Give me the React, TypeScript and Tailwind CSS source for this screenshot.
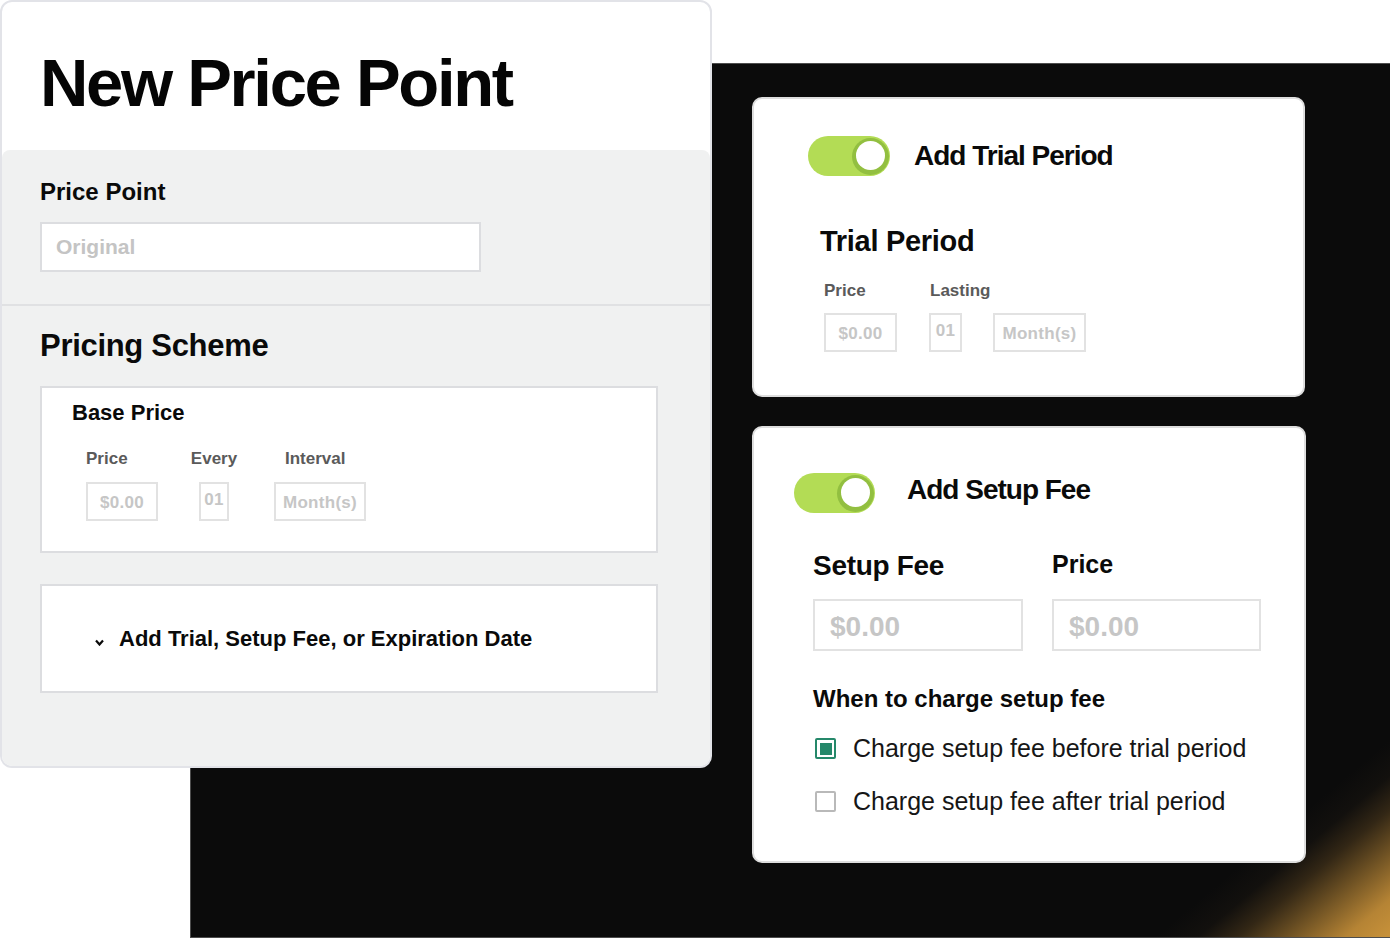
import React from "react";

function Toggle({ w }: { w: string }) {
  return (
    <div className={`${w} h-[40px] rounded-full bg-[#b3dc55] flex items-center justify-end pr-[1px] shrink-0`}>
      <div className="w-[37px] h-[37px] rounded-full bg-[#92bf40] flex items-center justify-center">
        <div className="w-[29px] h-[29px] rounded-full bg-white -translate-y-[1px]" />
      </div>
    </div>
  );
}

function SmallBox({ w, text, high }: { w: string; text: string; high?: boolean }) {
  return (
    <div
      className={`${w} h-[39px] border-2 border-[#e2e2e2] bg-white flex items-center justify-center text-[17px] font-bold text-[#c6c6c6] tracking-[0.3px] ${high ? "pb-[3px]" : "pt-[3px]"}`}
    >
      {text}
    </div>
  );
}

function Checkbox({ checked, label }: { checked?: boolean; label: string }) {
  return (
    <div className="flex items-center gap-[17px] pl-[2px]">
      {checked ? (
        <div className="w-[21px] h-[21px] border-2 border-[#25886a] rounded-[2px] flex items-center justify-center">
          <div className="w-[12px] h-[12px] bg-[#25886a]" />
        </div>
      ) : (
        <div className="w-[21px] h-[21px] border-2 border-[#b9b9b9] rounded-[2px]" />
      )}
      <span className="text-[25px] leading-none text-[#161616]">{label}</span>
    </div>
  );
}

export default function App() {
  return (
    <div className="relative w-[1390px] h-[938px] overflow-hidden bg-white pt-[63px] font-['Liberation_Sans',Arial,sans-serif]">
      {/* dark stage */}
      <div className="ml-[190px] h-[875px] border-l border-b border-t border-[#4d4d4d] bg-[#0b0b0b] bg-[linear-gradient(320deg,#c8923a_0%,rgba(196,142,56,0.92)_2%,rgba(170,124,50,0.68)_4.3%,rgba(115,84,38,0.38)_6.8%,rgba(60,46,28,0.15)_8.6%,rgba(11,11,11,0)_10.5%)] pl-[561px] pt-[33px] flex flex-col gap-[29px]">
        {/* trial card */}
        <div className="w-[553px] h-[300px] bg-white rounded-[10px] border-2 border-[#dedede] pt-[37px]">
          <div className="flex items-center gap-[24px] pl-[54px]">
            <Toggle w="w-[82px]" />
            <h2 className="text-[28px] leading-none font-bold tracking-[-1px] text-[#0a0a0a]">Add Trial Period</h2>
          </div>
          <div className="pl-[66px] mt-[51px]">
            <h3 className="text-[29px] leading-none font-bold tracking-[-0.3px] text-[#0a0a0a]">Trial Period</h3>
            <div className="pl-[4px] mt-[26px] flex text-[17px] leading-none font-bold text-[#5a5a5a]">
              <span className="w-[106px]">Price</span>
              <span>Lasting</span>
            </div>
            <div className="pl-[4px] mt-[14px] flex">
              <SmallBox w="w-[73px]" text="$0.00" />
              <SmallBox w="w-[33px] ml-[32px]" text="01" high />
              <SmallBox w="w-[93px] ml-[31px]" text="Month(s)" />
            </div>
          </div>
        </div>

        {/* setup fee card */}
        <div className="w-[554px] h-[437px] bg-white rounded-[10px] border-2 border-[#dedede] pt-[45px]">
          <div className="flex items-center gap-[32px] pl-[40px]">
            <Toggle w="w-[81px]" />
            <h2 className="text-[28px] leading-none font-bold tracking-[-1px] text-[#0a0a0a] translate-y-[-3px]">Add Setup Fee</h2>
          </div>
          <div className="pl-[59px] mt-[39px]">
            <div className="flex gap-[29px]">
              <div className="w-[210px]">
                <div className="h-[47px]">
                  <h3 className="text-[28px] leading-none font-bold tracking-[-0.3px] text-[#0a0a0a]">Setup Fee</h3>
                </div>
                <div className="h-[52px] border-2 border-[#e2e2e2] flex items-center pl-[15px] pt-[4px] text-[28px] font-bold text-[#c6c6c6]">$0.00</div>
              </div>
              <div className="w-[209px]">
                <div className="h-[47px]">
                  <h3 className="text-[25px] leading-none font-bold text-[#0a0a0a]">Price</h3>
                </div>
                <div className="h-[52px] border-2 border-[#e2e2e2] flex items-center pl-[15px] pt-[4px] text-[28px] font-bold text-[#c6c6c6]">$0.00</div>
              </div>
            </div>
            <h4 className="mt-[36px] text-[24px] leading-none font-bold text-[#0a0a0a]">When to charge setup fee</h4>
            <div className="mt-[25px] flex flex-col gap-[28px]">
              <Checkbox checked label="Charge setup fee before trial period" />
              <Checkbox label="Charge setup fee after trial period" />
            </div>
          </div>
        </div>
      </div>

      {/* price point panel, lying over the stage */}
      <div className="absolute left-0 top-0 w-[712px] h-[768px] rounded-[12px] border-2 border-[#e2e3e8] bg-white overflow-hidden flex flex-col">
        <div className="h-[148px] pl-[38px] pt-[47px]">
          <h1 className="text-[67px] leading-none font-bold tracking-[-2.3px] text-[#050505]">New Price Point</h1>
        </div>
        <div className="flex-1 bg-[#f0f1f1] rounded-t-[8px] flex flex-col">
          <div className="h-[154px] pl-[38px] pt-[30px]">
            <h2 className="text-[24px] leading-none font-bold text-[#0a0a0a]">Price Point</h2>
            <div className="mt-[18px] w-[441px] h-[50px] bg-white border-2 border-[#dcdde0] flex items-center pl-[14px] text-[21px] font-bold text-[#c4c4c4]">
              Original
            </div>
          </div>
          <div className="h-[2px] bg-[#e0e1e3]" />
          <div className="pl-[38px] pt-[24px]">
            <h2 className="text-[31px] leading-none font-bold tracking-[-0.3px] text-[#0a0a0a]">Pricing Scheme</h2>
            <div className="mt-[25px] w-[618px] h-[167px] bg-white border-2 border-[#dcdde0] pt-[14px] pl-[30px]">
              <h3 className="text-[22px] leading-none font-bold text-[#0a0a0a]">Base Price</h3>
              <div className="mt-[26px] pl-[14px] flex items-start">
                <div className="flex flex-col items-start w-[72px]">
                  <span className="text-[17px] leading-none font-bold text-[#5a5a5a]">Price</span>
                  <SmallBox w="w-[72px] mt-[15px]" text="$0.00" />
                </div>
                <div className="flex flex-col items-center w-[46px] ml-[33px]">
                  <span className="text-[17px] leading-none font-bold text-[#5a5a5a]">Every</span>
                  <SmallBox w="w-[30px] mt-[15px]" text="01" high />
                </div>
                <div className="flex flex-col items-center w-[92px] ml-[37px]">
                  <span className="text-[17px] leading-none font-bold text-[#5a5a5a] self-start ml-[11px]">Interval</span>
                  <SmallBox w="w-[92px] mt-[15px]" text="Month(s)" />
                </div>
              </div>
            </div>
            <div className="mt-[31px] w-[618px] h-[109px] bg-white border-2 border-[#dcdde0] flex items-center pl-[53px] gap-[15px]">
              <svg width="9" height="7" viewBox="0 0 9 7" className="translate-y-[4px]">
                <polyline points="1,1.5 4.5,5.5 8,1.5" fill="none" stroke="#0a0a0a" strokeWidth="2.2" />
              </svg>
              <span className="text-[22px] leading-none font-bold text-[#0a0a0a]">Add Trial, Setup Fee, or Expiration Date</span>
            </div>
          </div>
        </div>
      </div>
    </div>
  );
}
